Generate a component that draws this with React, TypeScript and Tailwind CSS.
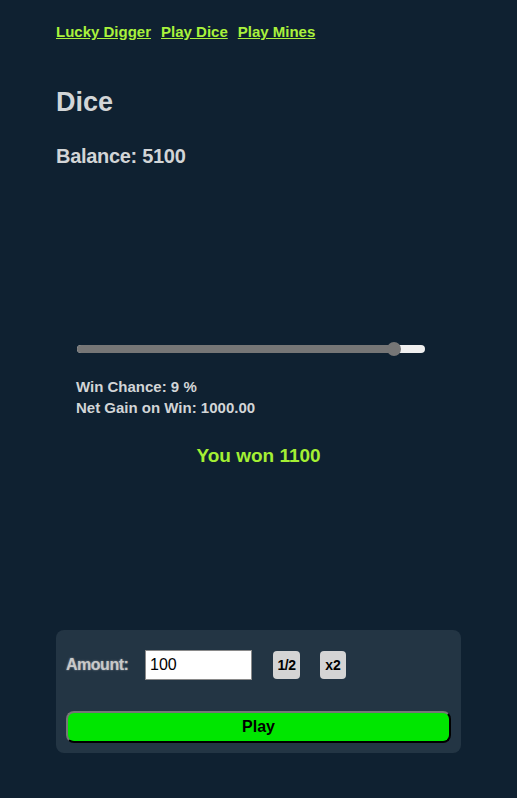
import { useState } from "react"

const font = { fontFamily: '"Liberation Sans", Arial, sans-serif' }

export default function App() {
  const [amount, setAmount] = useState("100")

  // slider fill in percent (thumb position)
  const pct = 91

  return (
    <div
      className="min-h-[798px] w-full bg-[#0f2131] px-[56px] pt-[23px] text-[#d2d5d7]"
      style={font}
    >
      <nav className="flex gap-[10px] text-[15px] font-bold leading-[18px]">
        <a href="#" className="text-[#a9f23c] underline">Lucky Digger</a>
        <a href="#" className="text-[#a9f23c] underline">Play Dice</a>
        <a href="#" className="text-[#a9f23c] underline">Play Mines</a>
      </nav>

      <h1 className="mt-[45px] text-[27px] font-bold leading-[32px]">Dice</h1>
      <h2 className="mt-[27px] text-[20px] font-bold leading-[22px] tracking-[-0.3px]">Balance: 5100</h2>

      <div className="relative ml-[21px] mt-[175px] flex h-[14px] w-[348px] items-center">
        <div className="flex h-[8px] w-full overflow-hidden rounded-full bg-[#efefef]">
          <div className="h-full bg-[#767676]" style={{ width: `${pct}%` }} />
        </div>
        <div
          className="absolute top-0 h-[14px] w-[14px] -translate-x-1/2 rounded-full bg-[#767676]"
          style={{ left: `${pct}%` }}
        />
      </div>

      <div className="ml-[20px] mt-[20px] text-[15px] font-bold leading-[21px]">
        <div>Win Chance: 9 %</div>
        <div>Net Gain on Win: 1000.00</div>
      </div>

      <h3 className="mt-[26px] text-center text-[19px] font-bold leading-[24px] text-[#a4f034]">
        You won 1100
      </h3>

      <div className="mt-[162px] rounded-[8px] bg-[#233544] p-[10px]">
        <div className="my-[10px] flex h-[30px] items-center">
          <label className="w-[79px] text-[16px] font-bold tracking-[-0.03em] text-[#c9c9c9] [text-shadow:0_0_2px_rgba(220,220,220,0.6)]">
            Amount:
          </label>
          <input
            value={amount}
            onChange={(e) => setAmount(e.target.value)}
            className="h-[30px] w-[107px] border border-[#8a8a8a] bg-white px-[4px] text-[16px] text-black outline-none"
            style={font}
          />
          <button className="ml-[21px] h-[28px] w-[27px] rounded-[4px] bg-[#d4d4d4] text-[14px] font-bold tracking-[-0.04em] text-black">
            1/2
          </button>
          <button className="ml-[20px] h-[28px] w-[26px] rounded-[4px] bg-[#d4d4d4] text-[14px] font-bold text-black">
            x2
          </button>
        </div>
        <button className="mt-[31px] block h-[32px] w-full rounded-[8px] border-2 border-b-black border-l-[#767676] border-r-black border-t-[#767676] bg-[#00e600] text-[16px] font-bold text-black">
          Play
        </button>
      </div>
    </div>
  )
}
